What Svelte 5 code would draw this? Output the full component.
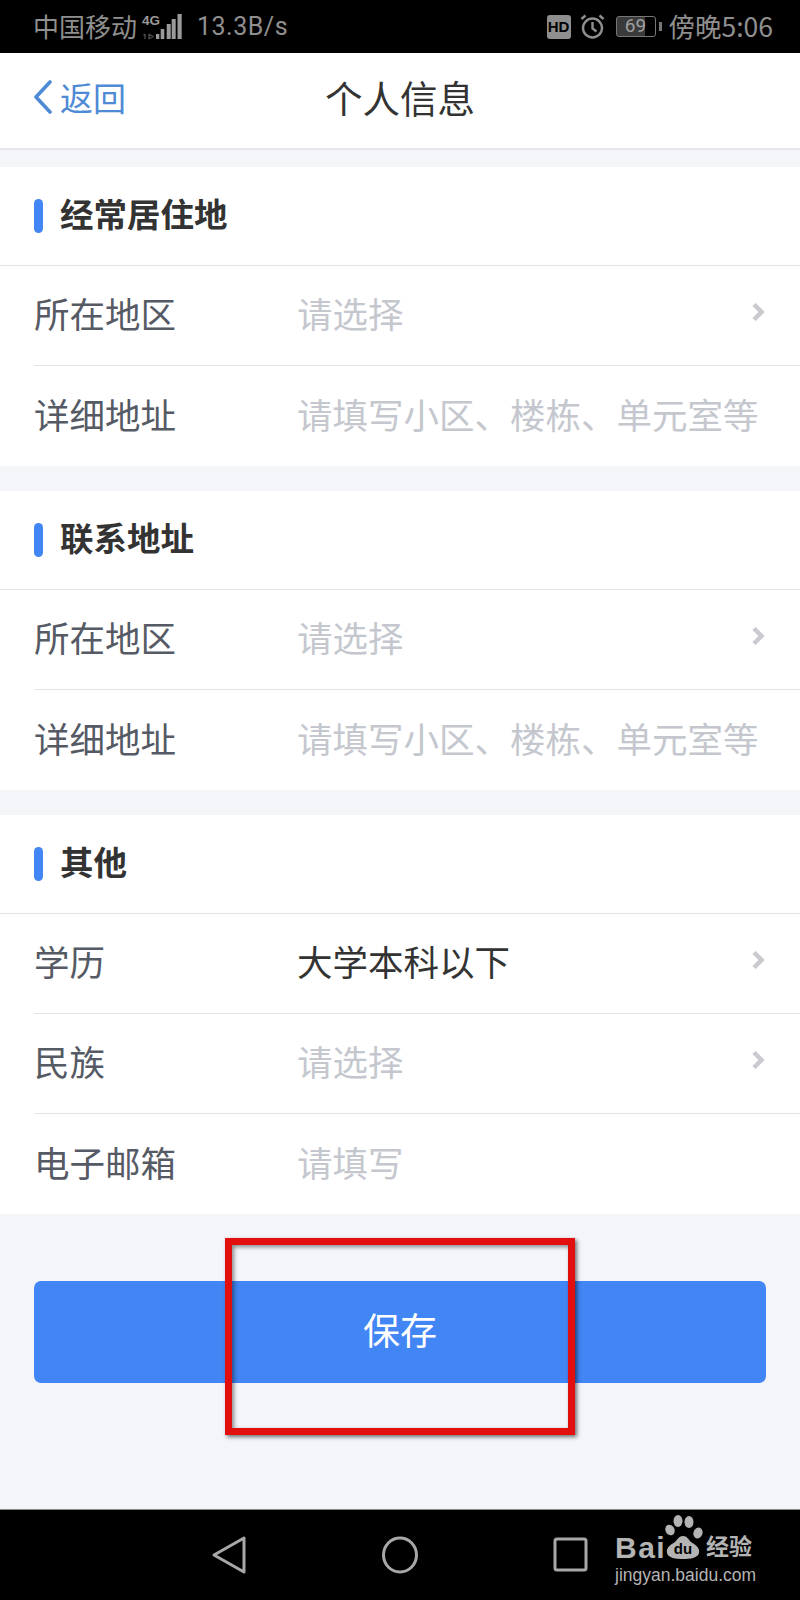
<script>
  const sections = [
    {
      title: '经常居住地',
      rows: [
        { label: '所在地区', value: '请选择', arrow: true },
        { label: '详细地址', value: '请填写小区、楼栋、单元室等' }
      ]
    },
    {
      title: '联系地址',
      rows: [
        { label: '所在地区', value: '请选择', arrow: true },
        { label: '详细地址', value: '请填写小区、楼栋、单元室等' }
      ]
    },
    {
      title: '其他',
      rows: [
        { label: '学历', value: '大学本科以下', arrow: true, filled: true },
        { label: '民族', value: '请选择', arrow: true },
        { label: '电子邮箱', value: '请填写' }
      ]
    }
  ];
</script>

<div class="phone">
  <header class="status">
    <div class="status-left">
      <span class="carrier">中国移动</span>
      <svg class="signal" width="40" height="26" viewBox="0 0 40 26">
        <text x="0" y="11" class="net">4G</text>
        <path d="M3 20v5M1.500 21.500l1.500-1.500M7 20v5M7 20l4 2.500-4 2.500" stroke="#4a4a4a" stroke-width="1.400" fill="none" />
        <rect x="14" y="20" width="3.300" height="5" fill="#9a9a9a" />
        <rect x="18.700" y="15" width="3.600" height="10" fill="#9a9a9a" />
        <rect x="24.700" y="10" width="4" height="15" fill="#9a9a9a" />
        <rect x="29.700" y="5" width="4" height="20" fill="#9a9a9a" />
        <rect x="35.500" y="0" width="4.200" height="25" fill="#9a9a9a" />
      </svg>
      <span class="speed">13.3B/s</span>
    </div>
    <div class="status-right">
      <span class="hd">HD</span>
      <svg class="alarm" width="25" height="25" viewBox="0 0 25 25" fill="none" stroke="#8f8f8f" stroke-width="2.400">
        <circle cx="12.500" cy="14" r="9.500" />
        <path d="M12.500 8v6.500l4 3" />
        <path d="M1.500 5l4-3.500M23.500 5l-4-3.500" />
      </svg>
      <span class="battery"><span class="level">69</span></span>
      <span class="clock">傍晚5:06</span>
    </div>
  </header>

  <nav class="topbar">
    <div class="back">
      <svg width="20" height="34" viewBox="0 0 20 34" fill="none" stroke="#4f8ad6" stroke-width="3.600" stroke-linecap="round" stroke-linejoin="round">
        <path d="M17 2L3 17l14 15" />
      </svg>
      <span>返回</span>
    </div>
    <h1>个人信息</h1>
  </nav>

  <main class="content">
    {#each sections as section}
      <section class="card">
        <div class="card-title"><i></i><span>{section.title}</span></div>
        {#each section.rows as row}
          <div class="row">
            <span class="label">{row.label}</span>
            <span class="value" class:filled={row.filled}>{row.value}</span>
            {#if row.arrow}
              <svg class="arrow" width="13" height="18" viewBox="0 0 13 18" fill="none" stroke="#c9cbd1" stroke-width="4.500">
                <path d="M2 1.500l7.500 7.500-7.500 7.500" />
              </svg>
            {/if}
          </div>
        {/each}
      </section>
    {/each}

    <button class="save">保存</button>
  </main>

  <footer class="softkeys">
    <svg width="36" height="40" viewBox="0 0 36 40" fill="none" stroke="#a8a8a8" stroke-width="3" stroke-linejoin="round">
      <path d="M33 3v34L3 20z" />
    </svg>
    <svg width="36" height="40" viewBox="0 0 36 40" fill="none" stroke="#a8a8a8" stroke-width="3">
      <ellipse cx="18" cy="20" rx="16.500" ry="17" />
    </svg>
    <svg width="36" height="40" viewBox="0 0 36 40" fill="none" stroke="#a8a8a8" stroke-width="3" stroke-linejoin="round">
      <rect x="2" y="4" width="31" height="31" rx="2" />
    </svg>
  </footer>

  <div class="highlight"></div>

  <div class="watermark">
    <div class="wm-top">
      <span class="bai">Bai</span>
      <svg class="paw" width="40" height="45" viewBox="0 0 40 45">
        <g fill="#b4b4b4">
          <ellipse cx="7" cy="15" rx="4.500" ry="5.500" transform="rotate(-25 7 15)" />
          <ellipse cx="15" cy="6" rx="4.500" ry="6" />
          <ellipse cx="26" cy="7" rx="4.500" ry="6" />
          <ellipse cx="35" cy="18" rx="4.500" ry="5.500" transform="rotate(20 35 18)" />
          <path d="M20 21c-4 0-5 3-8 6-5 3-9 6-8 11 1 5 9 6 16 6s15-1 16-6c1-5-3-8-8-11-3-3-4-6-8-6z" />
        </g>
        <text x="20" y="39" class="du">du</text>
      </svg>
      <span class="jy">经验</span>
    </div>
    <div class="wm-url">jingyan.baidu.com</div>
  </div>
</div>

<style>
  :global(body) {
    margin: 0;
    background: #f3f5f9;
  }

  .phone {
    position: relative;
    width: 800px;
    height: 1600px;
    display: flex;
    flex-direction: column;
    overflow: hidden;
    background: #f3f5f9;
    font-family: "Noto Sans CJK SC", "Noto Sans", sans-serif;
  }

  .status {
    height: 53px;
    flex: none;
    box-sizing: border-box;
    padding: 0 27px 0 33px;
    background: #000;
    color: #8f8f8f;
    display: flex;
    align-items: center;
    justify-content: space-between;
  }

  .status-left,
  .status-right {
    display: flex;
    align-items: center;
  }

  .carrier {
    width: 104px;
    font-size: 26px;
    line-height: 36px;
    padding-bottom: 2px;
    white-space: nowrap;
  }

  .signal {
    margin-left: 5px;
  }

  .net {
    font: bold 13.500px "Liberation Sans", sans-serif;
    fill: #9a9a9a;
  }

  .speed {
    margin-left: 15px;
    font-family: Roboto, sans-serif;
    font-size: 25px;
    letter-spacing: 0.500px;
  }

  .hd {
    width: 24px;
    height: 24px;
    border-radius: 3px;
    background: #8f8f8f;
    color: #000;
    font: bold 15px/24px "Liberation Sans", sans-serif;
    text-align: center;
    margin-right: 9px;
  }

  .battery {
    position: relative;
    box-sizing: border-box;
    width: 40px;
    height: 21px;
    margin: 0 13px 0 11px;
    border: 1.500px solid #777;
    border-radius: 3px;
    background: linear-gradient(90deg, #3a3a3a 75%, #000 75%);
    text-align: center;
  }

  .battery::after {
    content: "";
    position: absolute;
    right: -7px;
    top: 5px;
    width: 3px;
    height: 9px;
    background: #777;
  }

  .level {
    display: block;
    font: 19px/18px Roboto, sans-serif;
    color: #a0a0a0;
  }

  .clock {
    font-size: 26.500px;
    line-height: 36px;
    padding-bottom: 2px;
    white-space: nowrap;
  }

  .topbar {
    position: relative;
    height: 97px;
    flex: none;
    box-sizing: border-box;
    background: #fff;
    border-bottom: 2px solid #e4e6ec;
    display: flex;
    align-items: center;
    justify-content: center;
  }

  .back {
    position: absolute;
    left: 33px;
    top: 24px;
    display: flex;
    align-items: center;
    gap: 7px;
    color: #4f8ad6;
    font-size: 33px;
    line-height: 40px;
  }

  h1 {
    margin: 0;
    padding-bottom: 8px;
    font-size: 37.500px;
    font-weight: 400;
    color: #333;
    line-height: 48px;
  }

  .content {
    flex: 1;
    display: flex;
    flex-direction: column;
    padding-top: 17px;
    gap: 25px;
  }

  .card {
    background: #fff;
  }

  .card-title {
    height: 99px;
    box-sizing: border-box;
    padding-left: 34px;
    display: flex;
    align-items: center;
    gap: 17px;
    font-size: 33.500px;
    font-weight: 700;
    color: #333;
    border-bottom: 1px solid #e3e4e8;
  }

  .card-title span {
    padding-bottom: 8px;
  }

  .card-title i {
    width: 9px;
    height: 34px;
    border-radius: 5px;
    background: #4285f4;
  }

  .row {
    position: relative;
    height: 100px;
    box-sizing: border-box;
    margin-left: 34px;
    padding-bottom: 6px;
    display: flex;
    align-items: center;
    font-size: 35.500px;
    color: #555a64;
    border-bottom: 1px solid #e3e4e8;
  }

  .row:last-child {
    border-bottom: 0;
  }

  .label {
    width: 263px;
    flex: none;
  }

  .value {
    color: #c5c7ce;
  }

  .value.filled {
    color: #333;
  }

  .arrow {
    position: absolute;
    right: 35px;
    top: 37px;
  }

  .save {
    margin: 42px 34px 0;
    height: 102px;
    padding: 0 0 6px;
    border: 0;
    border-radius: 7px;
    background: #4285f4;
    color: #fff;
    font-family: inherit;
    font-size: 37px;
  }

  .softkeys {
    height: 91px;
    flex: none;
    box-sizing: border-box;
    background: #000;
    border-top: 1px solid #888;
    display: flex;
    align-items: center;
    padding-left: 211px;
    gap: 135px;
  }

  .highlight {
    position: absolute;
    left: 225px;
    top: 1238px;
    width: 350px;
    height: 197px;
    box-sizing: border-box;
    border: 7px solid #e30f0f;
    box-shadow: 2px 2px 4px rgba(0, 0, 0, 0.55), inset 2px 2px 4px rgba(0, 0, 0, 0.45);
  }

  .watermark {
    position: absolute;
    left: 615px;
    top: 1515px;
    color: #b4b4b4;
  }

  .wm-top {
    display: flex;
    height: 45px;
  }

  .bai {
    width: 48px;
    font: bold 30px/29px "Liberation Sans", sans-serif;
    padding-top: 18px;
    letter-spacing: 1.500px;
    white-space: nowrap;
  }

  .du {
    font: bold 15px "Liberation Sans", sans-serif;
    fill: #000;
    text-anchor: middle;
  }

  .jy {
    margin-left: 3px;
    padding-top: 15px;
    font-size: 23px;
    line-height: 30px;
    font-weight: 700;
    white-space: nowrap;
  }

  .wm-url {
    margin-top: 4px;
    font: 17.500px/22px "Liberation Sans", sans-serif;
    white-space: nowrap;
  }
</style>
